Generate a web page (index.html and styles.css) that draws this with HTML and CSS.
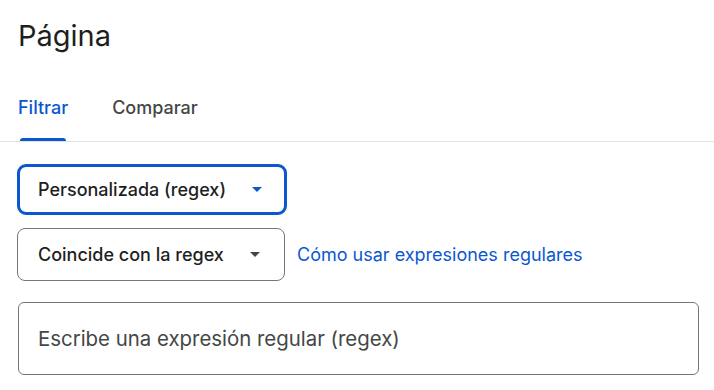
FILE: index.html
```
<!DOCTYPE html>
<html lang="es">
<head>
    <meta charset="UTF-8">
    <meta name="viewport" content="width=device-width, initial-scale=1.0">
    <title>Página</title>
    <link rel="stylesheet" href="styles.css">
</head>
<body>

<div class="panel">
    <h1 class="title">Página</h1>

    <div class="tabs">
        <div class="tab active">Filtrar</div>
        <div class="tab">Comparar</div>
    </div>

    <div class="form">
        <div class="select focused">
            <span>Personalizada (regex)</span>
            <span class="arrow"></span>
        </div>

        <div class="row">
            <div class="select">
                <span>Coincide con la regex</span>
                <span class="arrow"></span>
            </div>
            <a class="help-link" href="#">Cómo usar expresiones regulares</a>
        </div>

        <input class="regex-input" type="text" placeholder="Escribe una expresión regular (regex)">
    </div>
</div>

</body>
</html>
```

FILE: styles.css
```
body {
    font-family: Inter, "Noto Sans", Arial, sans-serif;
    background-color: #fff;
    color: #1f1f1f;
    margin: 0;
}
.panel {
    padding-top: 17px;
}
.title {
    font-size: 29px;
    font-weight: 400;
    margin: 0 0 0 18px;
    line-height: 38px;
}
.tabs {
    display: flex;
    gap: 44px;
    padding-left: 18px;
    margin-top: 34px;
    border-bottom: 1px solid #e1e3e1;
}
.tab {
    font-size: 18px;
    font-weight: 500;
    line-height: 24px;
    color: #444746;
    padding: 7px 0 21px;
    position: relative;
}
.tab.active {
    color: #0b57d0;
}
.tab.active::after {
    content: "";
    position: absolute;
    left: 2px;
    right: 2px;
    bottom: 0;
    height: 3px;
    background: #0b57d0;
    border-radius: 3px 3px 0 0;
}
.form {
    display: flex;
    flex-direction: column;
    gap: 13px;
    padding: 22px 15px 0 17px;
}
.row {
    display: flex;
    align-items: center;
    gap: 12px;
}
.select {
    width: 268px;
    height: 53px;
    box-sizing: border-box;
    border: 1px solid #747775;
    border-radius: 8px;
    display: flex;
    align-items: center;
    justify-content: space-between;
    padding: 0 24px 0 20px;
    font-size: 18px;
    font-weight: 500;
    color: #1f1f1f;
}
.select.focused {
    width: 270px;
    height: 51px;
    border: 3px solid #0b57d0;
    border-radius: 9px;
    padding: 0 22px 0 18px;
}
.select.focused .arrow {
    border-top-color: #0b57d0;
}
.arrow {
    width: 0;
    height: 0;
    border-left: 5px solid transparent;
    border-right: 5px solid transparent;
    border-top: 5px solid #444746;
}
.help-link {
    color: #0b57d0;
    text-decoration: none;
    font-size: 18px;
}
.regex-input {
    margin-top: 8px;
    height: 73px;
    box-sizing: border-box;
    border: 1px solid #747775;
    border-radius: 6px;
    padding: 0 19px;
    margin-left: 1px;
    font-family: Inter, "Noto Sans", Arial, sans-serif;
    font-size: 20.4px;
    color: #1f1f1f;
    outline: none;
}
.regex-input::placeholder {
    color: #444746;
}
```
